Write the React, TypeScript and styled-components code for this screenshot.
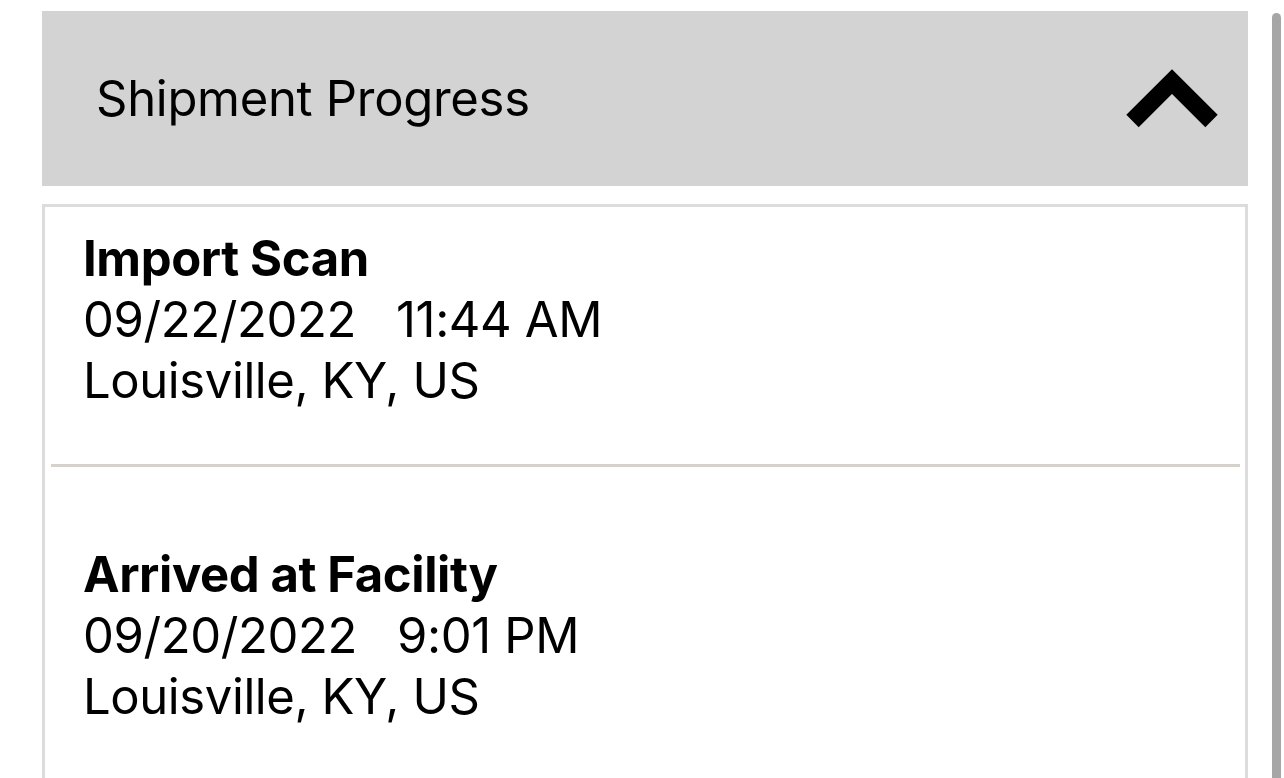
import React from "react";
import styled, { createGlobalStyle } from "styled-components";

const GlobalStyle = createGlobalStyle`
	html, body {
		margin: 0;
		padding: 0;
		background: #ffffff;
		overflow: hidden;
	}
	body {
		font-family: Inter, "Liberation Sans", Arial, sans-serif;
		color: #000000;
	}
`;

const Page = styled.div`
	position: relative;
	height: 778px;
	padding: 11px 36px 0 42px;
	box-sizing: border-box;
`;

const Header = styled.div`
	height: 175px;
	background: #d3d3d3;
	display: flex;
	align-items: center;
	justify-content: space-between;
	padding: 0 30px 0 54px;
	box-sizing: border-box;
`;

const Title = styled.div`
	font-size: 49px;
	font-weight: 400;
	letter-spacing: -0.3px;
`;

const Chevron = styled.svg`
	display: block;
	width: 92px;
	height: 60px;
	margin-top: -1px;
`;

const Card = styled.div`
	margin-top: 18px;
	border: 3px solid #dcdcdc;
	border-bottom: none;
	height: 700px;
	box-sizing: border-box;
`;

const Event = styled.div<{ $top: number; $bottom: number }>`
	padding: ${(p) => p.$top}px 0 ${(p) => p.$bottom}px 38px;
	font-size: 49px;
	line-height: 61px;
	letter-spacing: -0.4px;
`;

const EventName = styled.div`
	font-weight: 700;
	line-height: 60px;
`;

const EventLine = styled.div`
	white-space: pre;
`;

const Divider = styled.div`
	height: 3px;
	margin: 0 5px 0 6px;
	background: #d5d1cc;
`;

const ScrollIndicator = styled.div`
	position: absolute;
	top: 13px;
	right: 3px;
	width: 9px;
	height: 800px;
	border-radius: 4.5px;
	background: #a6a6a6;
`;

const events = [
	{ name: "Import Scan", date: "09/22/2022", time: "11:44 AM", place: "Louisville, KY, US" },
	{ name: "Arrived at Facility", date: "09/20/2022", time: "9:01 PM", place: "Louisville, KY, US" },
];

const App = () => {
	return (
		<>
			<GlobalStyle />
			<Page>
				<Header>
					<Title>Shipment Progress</Title>
					<Chevron viewBox="0 0 92 60">
						<polyline
							points="6.5,53 46,13.5 85.5,53"
							fill="none"
							stroke="#000"
							strokeWidth="17.5"
							strokeLinecap="butt"
							strokeLinejoin="miter"
						/>
					</Chevron>
				</Header>
				<Card>
					{events.map((ev, i) => (
						<React.Fragment key={ev.name}>
							{i > 0 && <Divider />}
							<Event $top={i === 0 ? 22 : 78} $bottom={53}>
								<EventName>{ev.name}</EventName>
								<EventLine>{ev.date + "   " + ev.time}</EventLine>
								<EventLine>{ev.place}</EventLine>
							</Event>
						</React.Fragment>
					))}
				</Card>
				<ScrollIndicator />
			</Page>
		</>
	);
};

export default App;
